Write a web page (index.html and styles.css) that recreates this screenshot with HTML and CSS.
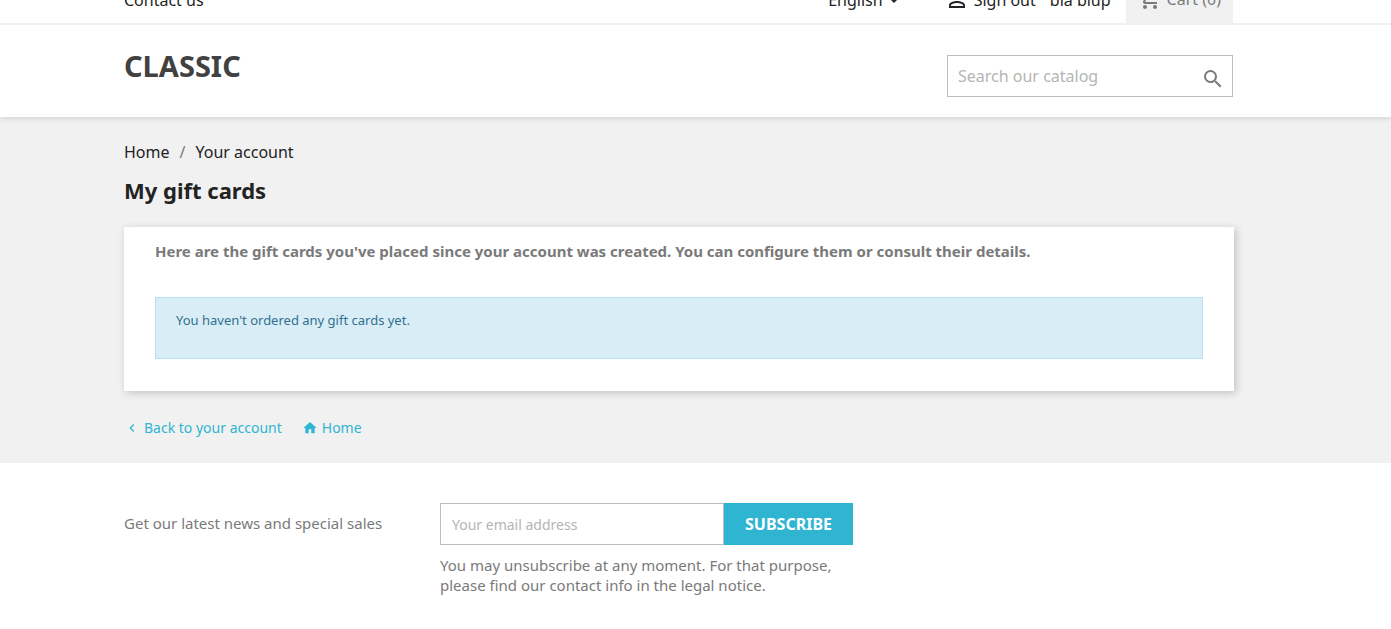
FILE: index.html
```html
<!DOCTYPE html>
<html lang="en">
<head>
  <title>My gift cards</title>
  <meta charset="utf-8">
  <link rel="stylesheet" href="styles.css">
</head>
<body>
<header id="header">
  <nav class="header-nav">
    <div class="container">
      <a href="#">Contact us</a>
      <div class="right-nav">
        <button type="button" class="language">English
          <svg width="10" height="5" viewBox="0 0 10 5"><path d="M0 0h10L5 5z"/></svg>
        </button>
        <div class="user-info">
          <a href="#">
            <svg width="24" height="24" viewBox="0 0 24 24"><path d="M12 5.9a2.1 2.1 0 1 1 0 4.2 2.1 2.1 0 0 1 0-4.2m0 9c2.970 0 6.100 1.460 6.100 2.100v1.100H5.900V17c0-.640 3.130-2.100 6.100-2.100M12 4C9.790 4 8 5.790 8 8s1.790 4 4 4 4-1.790 4-4-1.790-4-4-4zm0 9c-2.670 0-8 1.340-8 4v3h16v-3c0-2.660-5.330-4-8-4z"/></svg>
            Sign out
          </a>
          <a href="#">bla blup</a>
        </div>
        <div class="cart">
          <svg width="24" height="24" viewBox="0 0 24 24"><path d="M7 18c-1.100 0-1.990.9-1.990 2S5.900 22 7 22s2-.9 2-2-.9-2-2-2zM1 2v2h2l3.600 7.590-1.350 2.450c-.160.280-.250.610-.250.960 0 1.100.9 2 2 2h12v-2H7.420c-.140 0-.250-.110-.250-.250l.030-.120.900-1.630h7.450c.750 0 1.410-.410 1.750-1.030l3.580-6.490A1 1 0 0 0 20 4H5.210l-.940-2H1zm16 16c-1.100 0-1.990.9-1.990 2s.890 2 1.990 2 2-.9 2-2-.9-2-2-2z"/></svg>
          Cart (0)
        </div>
      </div>
    </div>
  </nav>
  <div class="header-top">
    <div class="container">
      <a href="#" class="logo">CLASSIC</a>
      <form class="search">
        <input type="text" placeholder="Search our catalog" aria-label="Search">
        <button type="submit" aria-label="Search">
          <svg width="24" height="24" viewBox="0 0 24 24"><path d="M15.500 14h-.790l-.280-.270A6.470 6.470 0 0 0 16 9.500 6.500 6.500 0 1 0 9.500 16c1.610 0 3.090-.590 4.230-1.570l.270.280v.790l5 4.990L20.490 19l-4.990-5zm-6 0a4.500 4.500 0 1 1 0-9 4.500 4.500 0 0 1 0 9z"/></svg>
        </button>
      </form>
    </div>
  </div>
</header>

<main id="wrapper">
  <div class="container">
    <nav class="breadcrumb">
      <a href="#">Home</a><span>/</span><a href="#">Your account</a>
    </nav>
    <h1>My gift cards</h1>
    <section class="card">
      <h2>Here are the gift cards you've placed since your account was created. You can configure them or consult their details.</h2>
      <p class="alert">You haven't ordered any gift cards yet.</p>
    </section>
    <div class="page-footer">
      <a href="#">
        <svg width="16" height="16" viewBox="0 0 24 24"><path d="M15.410 7.410 14 6l-6 6 6 6 1.410-1.410L10.830 12z"/></svg>
        Back to your account
      </a>
      <a href="#">
        <svg width="16" height="16" viewBox="0 0 24 24"><path d="M10 20v-6h4v6h5v-8h3L12 3 2 12h3v8z"/></svg>
        Home
      </a>
    </div>
  </div>
</main>

<footer id="footer">
  <div class="container">
    <label for="email">Get our latest news and special sales</label>
    <form class="newsletter">
      <div class="newsletter-row">
        <input type="email" id="email" placeholder="Your email address">
        <button type="submit">SUBSCRIBE</button>
      </div>
      <p>You may unsubscribe at any moment. For that purpose, please find our contact info in the legal notice.</p>
    </form>
  </div>
</footer>
</body>
</html>
```
FILE: styles.css
```css
* {
  box-sizing: border-box;
}

body {
  margin: 0;
  font-family: "Noto Sans", sans-serif;
  font-size: 15px;
  line-height: 20px;
  color: #7a7a7a;
  background: #fff;
}

a {
  color: #232323;
  text-decoration: none;
}

button,
input {
  font-family: inherit;
}

svg {
  fill: currentColor;
  flex: none;
}

h1,
h2,
p {
  margin: 0;
}

#wrapper,
#footer {
  padding-right: 33px;
}

.container {
  max-width: 1110px;
  margin: 0 auto;
}

#header {
  position: relative;
  box-shadow: 0 2px 5px 0 rgba(0, 0, 0, 0.11);
}

/* top bar, partly scrolled out of view */
.header-nav {
  height: 50px;
  margin-top: -25px;
  padding-right: 33px;
  border-bottom: 2px solid #f1f1f1;
  font-size: 16px;
}

.header-nav .container,
.right-nav,
.user-info,
.user-info a,
.cart {
  display: flex;
  align-items: center;
}

.header-nav .container {
  height: 50px;
  justify-content: space-between;
}

.language {
  display: flex;
  align-items: center;
  gap: 6px;
  margin-right: 46px;
  padding: 0;
  border: none;
  background: none;
  color: #232323;
  font-size: 16px;
}

.user-info {
  gap: 14px;
}

.user-info a {
  gap: 5px;
}

.cart {
  gap: 5px;
  height: 50px;
  margin: 0 1px 0 15px;
  padding: 0 12px 2px;
  background: #f1f1f1;
}

.header-top {
  padding: 30px 33px 20px 0;
}

.header-top .container {
  display: flex;
  justify-content: space-between;
  align-items: flex-start;
}

.logo {
  font-size: 29px;
  font-weight: bold;
  line-height: 22px;
  color: #414141;
}

.search {
  display: flex;
  width: 286px;
  height: 42px;
  margin-right: 1px;
  border: 1px solid #bdbdbd;
}

.search input {
  flex: 1;
  min-width: 0;
  padding: 0 10px;
  border: none;
  font-size: 16px;
}

.search button {
  display: flex;
  align-items: center;
  padding: 6px 7px 0 0;
  border: none;
  background: none;
  color: #7a7a7a;
}

input::placeholder {
  color: #b5b5b5;
}

#wrapper {
  padding-top: 25px;
  padding-bottom: 25px;
  background: #f1f1f1;
}

.breadcrumb {
  font-size: 16px;
}

.breadcrumb span {
  margin: 0 10px;
}

h1 {
  margin: 15px 0 24px;
  font-size: 22px;
  line-height: 26px;
  color: #232323;
}

.card {
  padding: 14px 31px 32px;
  background: #fff;
  box-shadow: 2px 2px 8px 0 rgba(0, 0, 0, 0.2);
}

h2 {
  margin-bottom: 36px;
  font-size: 15px;
  line-height: 20px;
}

.alert {
  min-height: 62px;
  padding: 12px 20px;
  border: 1px solid #bcdff1;
  background: #d9edf7;
  color: #31708f;
  font-size: 13px;
}

.page-footer {
  display: flex;
  gap: 20px;
  margin-top: 27px;
  font-size: 14px;
}

.page-footer a {
  display: flex;
  align-items: center;
  gap: 4px;
  color: #2fb5d2;
}

#footer {
  padding-top: 40px;
  padding-bottom: 32px;
}

#footer .container {
  display: flex;
}

#footer label {
  width: 316px;
  padding-top: 10px;
}

.newsletter {
  width: 413px;
}

.newsletter-row {
  display: flex;
  height: 42px;
  margin-bottom: 10px;
}

.newsletter input {
  flex: 1;
  min-width: 0;
  padding: 0 11px;
  border: 1px solid #bdbdbd;
  font-size: 14px;
}

.newsletter button {
  width: 129px;
  border: none;
  background: #2fb5d2;
  color: #fff;
  font-size: 16px;
  font-weight: bold;
}
```
